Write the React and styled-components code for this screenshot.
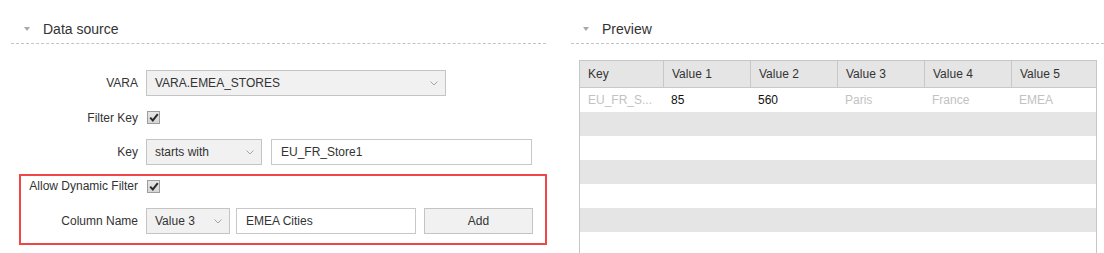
import React from "react";
import styled, { createGlobalStyle } from "styled-components";

const Global = createGlobalStyle`
  html, body { margin: 0; padding: 0; background: #fff; }
  body { font-family: "Liberation Sans", Arial, sans-serif; color: #333; overflow: hidden; }
`;

const Page = styled.div`
  display: grid;
  grid-template-columns: 535px 533px;
  column-gap: 25px;
  padding-left: 11px;
  height: 253px;
  overflow: hidden;
`;

const Column = styled.section`
  display: flex;
  flex-direction: column;
  min-width: 0;
`;

const SectionHeader = styled.div`
  display: flex;
  align-items: center;
  gap: 13px;
  height: 44px;
  box-sizing: border-box;
  padding: 20px 0 6px ${(p) => p.$indent}px;
  border-bottom: 1px dashed #c4c4c4;
`;

const Caret = styled.span`
  width: 0;
  height: 0;
  border-left: 3.5px solid transparent;
  border-right: 3.5px solid transparent;
  border-top: 4px solid #a8a8a8;
  margin-top: 1px;
`;

const Title = styled.span`
  font-size: 14px;
  line-height: 18px;
  color: #333;
`;

const Form = styled.div`
  display: flex;
  flex-direction: column;
  padding: 26px 1px 0 10px;
`;

const Row = styled.div`
  display: grid;
  grid-template-columns: 117px 1fr;
  column-gap: 8px;
  align-items: center;
  height: ${(p) => p.$h || 26}px;
  margin-top: ${(p) => p.$mt || 0}px;
`;

const Label = styled.span`
  font-size: 12px;
  text-align: right;
  color: #333;
  white-space: nowrap;
`;

const Controls = styled.div`
  display: flex;
  align-items: center;
  gap: ${(p) => p.$gap || 8}px;
  height: 100%;
`;

const SelectBox = styled.div`
  width: ${(p) => p.$w}px;
  height: 26px;
  box-sizing: border-box;
  display: flex;
  align-items: center;
  justify-content: space-between;
  padding: 0 7px 0 8px;
  background: #f1f1f1;
  border: 1px solid #c4c4c4;
  font-size: 12px;
  color: #333;
`;

const TextBox = styled.div`
  width: ${(p) => p.$w}px;
  height: 26px;
  box-sizing: border-box;
  display: flex;
  align-items: center;
  padding-left: 9px;
  background: #fff;
  border: 1px solid #c8c8c8;
  font-size: 12px;
  color: #333;
`;

const Button = styled.button`
  width: ${(p) => p.$w}px;
  height: 26px;
  box-sizing: border-box;
  margin-left: 2px;
  background: #f1f1f1;
  border: 1px solid #c4c4c4;
  font-family: "Liberation Sans", Arial, sans-serif;
  font-size: 12px;
  color: #333;
  padding: 0;
`;

const CheckBox = styled.span`
  width: 13px;
  height: 13px;
  box-sizing: border-box;
  margin-left: 1px;
  border: 1px solid #9d9d9d;
  background: linear-gradient(#e6e6e6, #d6d6d6);
  display: flex;
  align-items: center;
  justify-content: center;
`;

const Highlight = styled.div`
  margin-top: 11px;
  outline: 2px solid #f04646;
  display: flex;
  flex-direction: column;
  padding: 0 12px 9px 0;
`;

const Table = styled.div`
  margin: 16px 7px 0 8px;
  border: 1px solid #c6c6c6;
  border-bottom: none;
  flex: 1;
`;

const TableRow = styled.div`
  display: grid;
  grid-template-columns: 83px repeat(4, 87px) 1fr;
  height: ${(p) => (p.$head ? 26 : 24)}px;
  background: ${(p) => (p.$shade ? "#e5e5e5" : "#fff")};
  border-bottom: ${(p) => (p.$head ? "1px solid #c8c8c8" : "none")};
`;

const Cell = styled.div`
  display: flex;
  align-items: center;
  padding-left: 8px;
  font-size: 12px;
  color: ${(p) => (p.$muted ? "#c2c2c2" : p.$head ? "#333" : "#111")};
  border-left: ${(p) => (p.$sep ? "1px solid #c8c8c8" : "none")};
  white-space: nowrap;
  overflow: hidden;
`;

const Chevron = () => (
  <svg width="8" height="5" viewBox="0 0 8 5">
    <path d="M0.5 0.5 L4 4 L7.5 0.5" fill="none" stroke="#a5a5a5" strokeWidth="1" />
  </svg>
);

const Check = () => (
  <svg width="10" height="9" viewBox="0 0 10 9">
    <path d="M1.2 4.6 L3.8 7.4 L8.8 1.2" fill="none" stroke="#2a2a2a" strokeWidth="2" />
  </svg>
);

const Select = ({ w, children }) => (
  <SelectBox $w={w}>
    <span>{children}</span>
    <Chevron />
  </SelectBox>
);

const headers = ["Key", "Value 1", "Value 2", "Value 3", "Value 4", "Value 5"];
const data = [
  { v: "EU_FR_S...", muted: true },
  { v: "85" },
  { v: "560" },
  { v: "Paris", muted: true },
  { v: "France", muted: true },
  { v: "EMEA", muted: true },
];

export default function App() {
  return (
    <>
      <Global />
      <Page>
        <Column>
          <SectionHeader $indent={13}>
            <Caret />
            <Title>Data source</Title>
          </SectionHeader>
          <Form>
            <Row>
              <Label>VARA</Label>
              <Controls>
                <Select w={300}>VARA.EMEA_STORES</Select>
              </Controls>
            </Row>
            <Row $mt={8} $h={27}>
              <Label>Filter Key</Label>
              <Controls>
                <CheckBox><Check /></CheckBox>
              </Controls>
            </Row>
            <Row $mt={8}>
              <Label>Key</Label>
              <Controls $gap={9}>
                <Select w={116}>starts with</Select>
                <TextBox $w={261}>EU_FR_Store1</TextBox>
              </Controls>
            </Row>
            <Highlight>
              <Row $h={20}>
                <Label>Allow Dynamic Filter</Label>
                <Controls>
                  <CheckBox><Check /></CheckBox>
                </Controls>
              </Row>
              <Row $mt={12}>
                <Label>Column Name</Label>
                <Controls $gap={6}>
                  <Select w={84}>Value 3</Select>
                  <TextBox $w={180}>EMEA Cities</TextBox>
                  <Button $w={109}>Add</Button>
                </Controls>
              </Row>
            </Highlight>
          </Form>
        </Column>
        <Column>
          <SectionHeader $indent={12}>
            <Caret />
            <Title>Preview</Title>
          </SectionHeader>
          <Table>
            <TableRow $head $shade>
              {headers.map((h, i) => (
                <Cell key={h} $head $sep={i > 0}>{h}</Cell>
              ))}
            </TableRow>
            <TableRow>
              {data.map((d, i) => (
                <Cell key={i} $muted={d.muted}>{d.v}</Cell>
              ))}
            </TableRow>
            {[1, 2, 3, 4, 5, 6].map((i) => (
              <TableRow key={i} $shade={i % 2 === 1} />
            ))}
          </Table>
        </Column>
      </Page>
    </>
  );
}
